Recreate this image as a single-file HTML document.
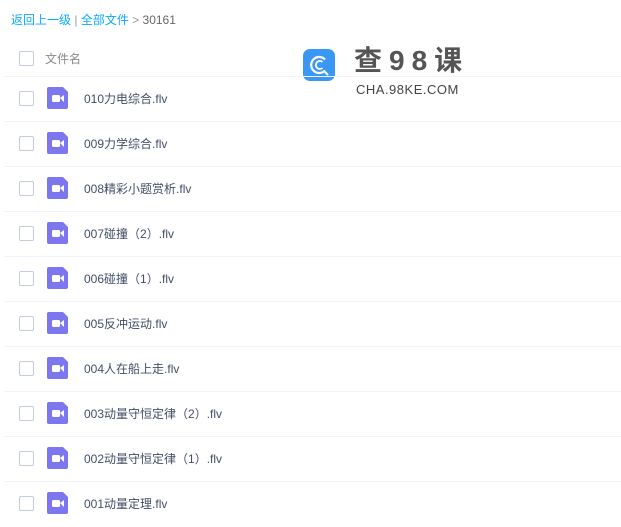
<!DOCTYPE html>
<html><head><meta charset="utf-8"><style>
body{margin:0;width:621px;height:516px;background:#fff;font-family:"Liberation Sans","Noto Sans CJK SC",sans-serif;position:relative;overflow:hidden}
.bc{position:absolute;left:11px;top:11px;font-size:12px;color:#999}
.bc a{color:#09aaff;text-decoration:none}
.cb{position:absolute;left:19px;width:13px;height:13px;border:1px solid #c3ccd9;border-radius:2px;background:#fff}
.row{position:absolute;left:4px;right:0;height:45px;border-top:1px solid #f1f3f6}
.name{position:absolute;left:84px;font-size:12px;color:#424e67}
.ic{position:absolute;left:47px;width:22px;height:22px}
</style></head><body>
<div class="bc"><a>返回上一级</a> | <a>全部文件</a> &gt; <span style="color:#666">30161</span></div>
<div class="cb" style="top:51px"></div>
<div style="position:absolute;left:45px;top:50px;font-size:12px;color:#888">文件名</div>
<div style="position:absolute;left:4px;right:0;top:76px;border-top:1px solid #f1f3f6"></div>
<div style="position:absolute;left:303px;top:49px;width:32px;height:32px;border-radius:7px;background:#3b97f5"><svg width="32" height="32"><path d="M22 10.5A8 8 0 1 0 22 21.5" fill="none" stroke="#fff" stroke-width="2.2"/><path d="M19.5 13A4 4 0 1 0 19.5 19" fill="none" stroke="#fff" stroke-width="1.8"/><path d="M21 22l4 4" stroke="#fff" stroke-width="2.2"/></svg></div>
<div style="position:absolute;left:354px;top:45px;font-size:28px;line-height:32px;font-weight:bold;color:#555;letter-spacing:7px">查98课</div>
<div style="position:absolute;left:356px;top:82px;font-size:13px;color:#444;letter-spacing:0.5px">CHA.98KE.COM</div>
<div id="rows"></div>
<script>
var n=["010力电综合.flv","009力学综合.flv","008精彩小题赏析.flv","007碰撞（2）.flv","006碰撞（1）.flv","005反冲运动.flv","004人在船上走.flv","003动量守恒定律（2）.flv","002动量守恒定律（1）.flv","001动量定理.flv"];
var h="";
for(var i=0;i<10;i++){var c=98+45*i;
h+='<div class="row" style="top:'+(c-22)+'px"></div>';
h+='<div class="cb" style="top:'+(c-7)+'px"></div>';
h+='<svg class="ic" style="top:'+(c-11)+'px" viewBox="0 0 22 22"><path d="M2 0h14l5 5v15a2 2 0 0 1-2 2H2a2 2 0 0 1-2-2V2a2 2 0 0 1 2-2z" fill="#7c77ef"/><rect x="5" y="8" width="8" height="7" rx="1.5" fill="#fff"/><path d="M13 11l4-3v7z" fill="#fff"/></svg>';
h+='<div class="name" style="top:'+(c-8)+'px">'+n[i]+'</div>';}
document.getElementById("rows").innerHTML=h;
</script>
</body></html>
